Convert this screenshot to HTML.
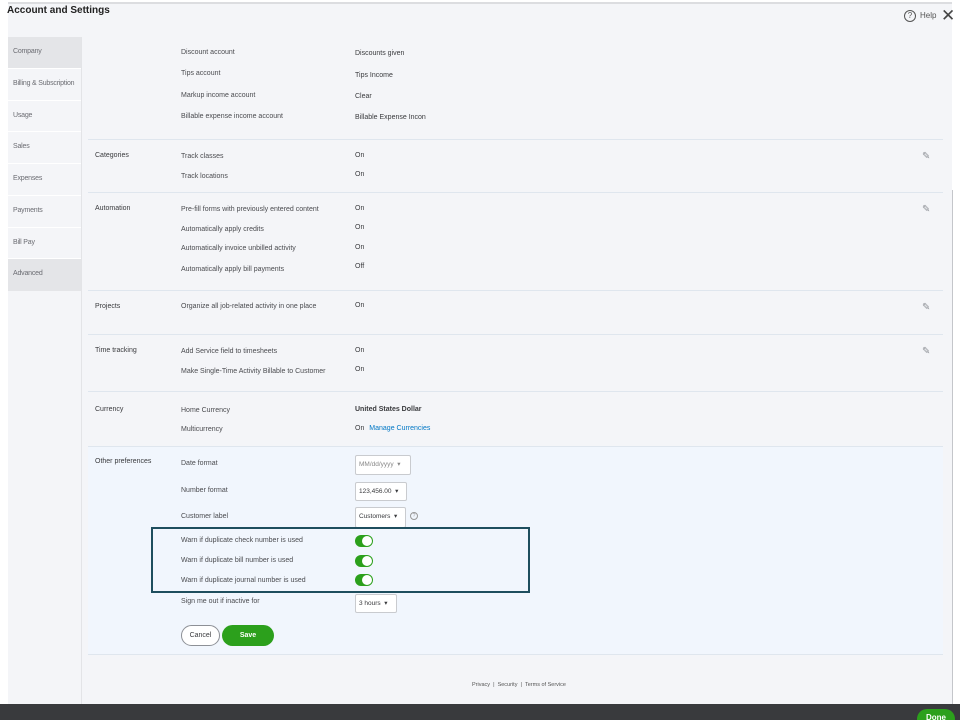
<!DOCTYPE html>
<html><head><meta charset="utf-8"><style>
*{margin:0;padding:0;box-sizing:border-box}
html,body{width:960px;height:720px;overflow:hidden}
body{background:#fff;font-family:"Liberation Sans",sans-serif;color:#393a3d;position:relative}
.a{position:absolute;white-space:nowrap}
.t{font-size:7px;color:#4a4b4f}
.h{font-size:7px;color:#393a3d}
.nav{position:absolute;left:8px;width:73px;height:31px;font-size:7px;color:#6b6c72;padding:11px 0 0 5px;background:#f4f5f8;white-space:nowrap;overflow:hidden;letter-spacing:-0.2px}
.sep{position:absolute;left:88px;width:855px;height:1px;background:#dfe6ee}
.sel{position:absolute;background:#fff;border:1px solid #c9cbcf;border-radius:2px;font-size:6.5px;padding:4px 3px;color:#393a3d;white-space:nowrap}
.tg{position:absolute;left:355px;width:18px;height:12px;border-radius:6px;background:#2ca01c}
.tg:after{content:"";position:absolute;right:1px;top:1px;width:10px;height:10px;border-radius:50%;background:#fff}
.pen{position:absolute;left:922px;font-size:10px;color:#8d9096}
</style></head><body>
<div class="a" style="left:8px;top:2px;width:944px;height:702px;background:#f4f5f8;border-top:2px solid #dcdde0"></div>
<div class="a" style="left:952px;top:190px;width:1px;height:514px;background:#c4c6ca"></div>
<div class="a" style="left:7px;top:5px;font-size:10px;font-weight:bold;color:#222">Account and Settings</div>
<div class="a" style="left:904px;top:10px;width:12px;height:12px;border:1px solid #555;border-radius:50%;font-size:8px;text-align:center;line-height:10px;color:#555">?</div>
<div class="a" style="left:920px;top:11px;font-size:8px;color:#555">Help</div>
<div class="a" style="left:941px;top:6px;font-size:17px;color:#444">✕</div>
<div class="a" style="left:81px;top:37px;width:1px;height:667px;background:#e3e4e7"></div>
<div class="nav" style="top:37px;background:#e4e5e8">Company</div>
<div class="nav" style="top:69px">Billing &amp; Subscription</div>
<div class="nav" style="top:101px">Usage</div>
<div class="nav" style="top:132px">Sales</div>
<div class="nav" style="top:164px">Expenses</div>
<div class="nav" style="top:196px">Payments</div>
<div class="nav" style="top:228px">Bill Pay</div>
<div class="nav" style="top:259px;background:#e4e5e8">Advanced</div>
<div class="a" style="left:8px;top:68px;width:73px;height:1px;background:#fff"></div>
<div class="a" style="left:8px;top:100px;width:73px;height:1px;background:#fff"></div>
<div class="a" style="left:8px;top:131px;width:73px;height:1px;background:#fff"></div>
<div class="a" style="left:8px;top:163px;width:73px;height:1px;background:#fff"></div>
<div class="a" style="left:8px;top:195px;width:73px;height:1px;background:#fff"></div>
<div class="a" style="left:8px;top:227px;width:73px;height:1px;background:#fff"></div>
<div class="a" style="left:8px;top:258px;width:73px;height:1px;background:#fff"></div>
<div class="a" style="left:8px;top:290px;width:73px;height:1px;background:#e4e5e8"></div>

<div class="a t" style="left:181px;top:49px">Discount account</div><div class="a h" style="left:355px;top:50px">Discounts given</div>
<div class="a t" style="left:181px;top:70px">Tips account</div><div class="a h" style="left:355px;top:72px">Tips Income</div>
<div class="a t" style="left:181px;top:92px">Markup income account</div><div class="a h" style="left:355px;top:93px">Clear</div>
<div class="a t" style="left:181px;top:113px">Billable expense income account</div><div class="a h" style="left:355px;top:114px">Billable Expense Incon</div>
<div class="sep" style="top:139px"></div>
<div class="a h" style="left:95px;top:152px">Categories</div>
<div class="a t" style="left:181px;top:153px">Track classes</div><div class="a h" style="left:355px;top:152px">On</div>
<div class="a t" style="left:181px;top:173px">Track locations</div><div class="a h" style="left:355px;top:171px">On</div>
<div class="pen" style="top:151px">✎</div>
<div class="sep" style="top:192px"></div>
<div class="a h" style="left:95px;top:205px">Automation</div>
<div class="a t" style="left:181px;top:206px">Pre-fill forms with previously entered content</div><div class="a h" style="left:355px;top:205px">On</div>
<div class="a t" style="left:181px;top:226px">Automatically apply credits</div><div class="a h" style="left:355px;top:224px">On</div>
<div class="a t" style="left:181px;top:245px">Automatically invoice unbilled activity</div><div class="a h" style="left:355px;top:244px">On</div>
<div class="a t" style="left:181px;top:266px">Automatically apply bill payments</div><div class="a h" style="left:355px;top:263px">Off</div>
<div class="pen" style="top:204px">✎</div>
<div class="sep" style="top:290px"></div>
<div class="a h" style="left:95px;top:303px">Projects</div>
<div class="a t" style="left:181px;top:303px">Organize all job-related activity in one place</div><div class="a h" style="left:355px;top:302px">On</div>
<div class="pen" style="top:302px">✎</div>
<div class="sep" style="top:334px"></div>
<div class="a h" style="left:95px;top:347px">Time tracking</div>
<div class="a t" style="left:181px;top:348px">Add Service field to timesheets</div><div class="a h" style="left:355px;top:347px">On</div>
<div class="a t" style="left:181px;top:368px">Make Single-Time Activity Billable to Customer</div><div class="a h" style="left:355px;top:366px">On</div>
<div class="pen" style="top:346px">✎</div>
<div class="sep" style="top:391px"></div>
<div class="a h" style="left:95px;top:406px">Currency</div>
<div class="a t" style="left:181px;top:407px">Home Currency</div><div class="a h" style="left:355px;top:406px;font-weight:bold">United States Dollar</div>
<div class="a t" style="left:181px;top:426px">Multicurrency</div><div class="a h" style="left:355px;top:425px">On <span style="color:#0077c5;margin-left:3px">Manage Currencies</span></div>

<div class="a" style="left:88px;top:446px;width:855px;height:209px;background:#f1f6fd;border-top:1px solid #dfe6ee;border-bottom:1px solid #dfe6ee"></div>
<div class="a h" style="left:95px;top:458px">Other preferences</div>
<div class="a t" style="left:181px;top:460px">Date format</div>
<div class="sel" style="left:355px;top:455px;width:56px;height:20px;color:#888">MM/dd/yyyy &nbsp;▾</div>
<div class="a t" style="left:181px;top:487px">Number format</div>
<div class="sel" style="left:355px;top:482px;width:52px;height:19px">123,456.00 &nbsp;▾</div>
<div class="a t" style="left:181px;top:513px">Customer label</div>
<div class="sel" style="left:355px;top:507px;width:51px;height:21px">Customers &nbsp;▾</div>
<div class="a" style="left:410px;top:512px;width:8px;height:8px;border:1px solid #999;border-radius:50%;font-size:5px;text-align:center;line-height:7px;color:#999">?</div>
<div class="a t" style="left:181px;top:537px">Warn if duplicate check number is used</div><div class="tg" style="top:535px"></div>
<div class="a t" style="left:181px;top:557px">Warn if duplicate bill number is used</div><div class="tg" style="top:555px"></div>
<div class="a t" style="left:181px;top:577px">Warn if duplicate journal number is used</div><div class="tg" style="top:574px"></div>
<div class="a" style="left:151px;top:527px;width:379px;height:66px;border:2px solid #1e4e5e"></div>
<div class="a t" style="left:181px;top:598px">Sign me out if inactive for</div>
<div class="sel" style="left:355px;top:594px;width:42px;height:19px">3 hours &nbsp;▾</div>
<div class="a" style="left:181px;top:625px;width:39px;height:21px;border:1px solid #8d9096;border-radius:11px;background:#fff;font-size:7px;text-align:center;line-height:19px">Cancel</div>
<div class="a" style="left:222px;top:625px;width:52px;height:21px;border-radius:11px;background:#2ca01c;color:#fff;font-size:7px;font-weight:bold;text-align:center;line-height:21px">Save</div>
<div class="a" style="left:472px;top:682px;font-size:5.5px;color:#555">Privacy &nbsp;| &nbsp;Security &nbsp;| &nbsp;Terms of Service</div>
<div class="a" style="left:0;top:704px;width:960px;height:16px;background:#393a3d"></div>
<div class="a" style="left:917px;top:709px;width:38px;height:11px;border-radius:10px 10px 0 0;background:#2ca01c;color:#fff;font-size:8px;font-weight:bold;padding:4px 0 0 9px;overflow:hidden">Done</div>
</body></html>
